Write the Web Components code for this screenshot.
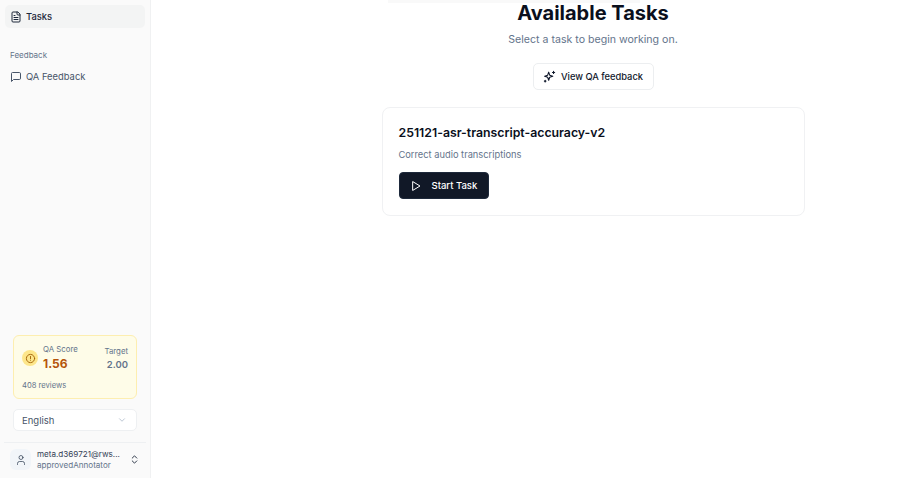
<!DOCTYPE html>
<html><head><meta charset="utf-8"><style>
html,body{margin:0;height:100%;background:#fff;overflow:hidden}
body{font-family:Inter,"Liberation Sans",sans-serif;color:#0f172a}
</style></head><body>
<app-shell>
<side-bar slot="side"></side-bar>
<task-page slot="main"></task-page>
</app-shell>
<script>
const def=(n,html)=>customElements.define(n,class extends HTMLElement{constructor(){super();this.attachShadow({mode:'open'}).innerHTML=html}});
def('app-shell',`<style>:host{display:flex;height:478px;width:919px;overflow:hidden}</style><slot name="side"></slot><slot name="main"></slot>`);
const ic=(s,p,w=1.5)=>`<svg width="${s}" height="${s}" viewBox="0 0 24 24" fill="none" stroke="currentColor" stroke-width="${w}" stroke-linecap="round" stroke-linejoin="round">${p}</svg>`;
def('nav-item',`<style>:host{display:flex;align-items:center;gap:4px;height:23px;padding:0 5px;margin:0;border-radius:5px;font-size:9.4px;color:#475569}
:host([active]){background:#f3f4f4;color:#1e293b;font-weight:500}
::slotted(svg){flex:none}</style><slot></slot>`);
def('score-card',`<style>:host{display:block;height:64px;box-sizing:border-box;margin:0 13px 0 13px;padding:8px 8px 0 8px;background:#fefce8;border:1px solid #fdeeb0;border-radius:6px}
.top{display:flex;align-items:center}
.badge{width:16px;height:16px;border-radius:50%;background:#fde68a;display:flex;align-items:center;justify-content:center;color:#a16207;margin-right:5px}
.lab{font-size:7.8px;color:#64748b;line-height:11px}
.val{font-size:12px;font-weight:700;color:#b45309;line-height:17px}
.r{margin-left:auto;text-align:right;padding-top:2px}
.t{font-size:7.8px;color:#64748b;line-height:11px}
.v{font-size:9.5px;font-weight:600;color:#64748b;line-height:15px}
.rev{font-size:7.6px;color:#64748b;margin-top:8px;line-height:11px}</style>
<div class="top"><div class="badge">${ic(11,'<circle cx="12" cy="12" r="9"/><path d="M12 7.5v5M12 16h.01"/>',2)}</div>
<div><div class="lab">QA Score</div><div class="val">1.56</div></div>
<div class="r"><div class="t">Target</div><div class="v">2.00</div></div></div>
<div class="rev">408 reviews</div>`);
def('lang-select',`<style>:host{display:flex;align-items:center;justify-content:space-between;height:22px;box-sizing:border-box;margin:10px 13px 0 13px;padding:0 9px 0 8px;background:#fff;border:1px solid #eef0f2;border-radius:5px;font-size:9.5px;color:#475569}
svg{color:#94a3b8}</style>English ${ic(10,'<path d="m6 9 6 6 6-6"/>')}`);
def('user-row',`<style>:host{display:flex;align-items:center;height:33px;margin:11px 4px 0;border-top:1px solid #eef0f2;padding:0 6px 2px}
.av{width:21px;height:21px;border-radius:6px;background:#f1f5f9;display:flex;align-items:center;justify-content:center;color:#334155;margin-right:6px;flex:none}
.txt{flex:1;min-width:0;font-size:8.1px;line-height:11px}
.n{color:#334155;white-space:nowrap}
.ro{color:#64748b}
.ch{color:#1e293b;display:flex}</style>
<div class="av">${ic(12,'<path d="M19 21v-2a4 4 0 0 0-4-4H9a4 4 0 0 0-4 4v2"/><circle cx="12" cy="7" r="4"/>')}</div>
<div class="txt"><div class="n">meta.d369721@rws...</div><div class="ro">approvedAnnotator</div></div>
<div class="ch">${ic(11,'<path d="m7 15 5 5 5-5M7 9l5-5 5 5"/>',2)}</div>`);
def('side-bar',`<style>:host{display:flex;flex-direction:column;flex:none;width:151px;height:478px;box-sizing:border-box;background:#fafafa;border-right:1px solid #f0f1f2}
.nav{padding:5px 5px 0 5px}
.grp{font-size:8px;color:#64748b;margin:22px 0 0 5px;line-height:11px;height:15px}
.sp{flex:1}</style>
<div class="nav"><nav-item active>${ic(12,'<path d="M15 2H6a2 2 0 0 0-2 2v16a2 2 0 0 0 2 2h12a2 2 0 0 0 2-2V7Z"/><path d="M14 2v4a2 2 0 0 0 2 2h4M10 9H8M16 13H8M16 17H8"/>',2)}Tasks</nav-item>
<div class="grp">Feedback</div>
<nav-item>${ic(12,'<path d="M21 15a2 2 0 0 1-2 2H7l-4 4V5a2 2 0 0 1 2-2h14a2 2 0 0 1 2 2z"/>',2)}QA Feedback</nav-item></div>
<div class="sp"></div><score-card></score-card><lang-select></lang-select><user-row></user-row>`);
def('task-card',`<style>:host{display:block;box-sizing:border-box;width:423px;height:109px;border:1px solid #f0f1f3;border-radius:8px;padding:16px 16px 0 16px;background:#fff}
h3{margin:0;font-size:12.3px;font-weight:600;line-height:17px;color:#0a0f1c}
p{margin:7px 0 0;font-size:9.3px;line-height:13px;color:#64748b}
button{margin-top:11px;display:flex;align-items:center;width:90px;height:27px;box-sizing:border-box;padding:0 0 0 10px;background:#111827;color:#fff;border:1px solid #1e293b;border-radius:4px;font:500 9.5px Inter,sans-serif}
svg{margin-right:10px}</style>
<h3>251121-asr-transcript-accuracy-v2</h3><p>Correct audio transcriptions</p>
<button>${ic(12,'<path d="M6 3.5 20 12 6 20.5z"/>',2)}Start Task</button>`);
def('task-page',`<style>:host{display:flex;flex-direction:column;align-items:center;flex:1;padding:0 0 0 116px;box-sizing:border-box;min-width:0;position:relative}
.line{position:absolute;top:0;left:237px;width:252px;height:3px;background:#f9f9f9}
h1{margin:0;font-size:20px;font-weight:700;line-height:26px;color:#0a0f1c}
p{margin:6px 0 0;font-size:10.6px;line-height:15px;color:#64748b}
.fb{margin-top:16px;display:flex;align-items:center;gap:5px;height:27px;width:121px;justify-content:center;padding:0;box-sizing:border-box;background:#fff;border:1px solid #eceef0;border-radius:5px;font:500 9.3px Inter,sans-serif;color:#0f172a}
task-card{margin-top:17px}</style>
<div class="line"></div><h1>Available Tasks</h1><p>Select a task to begin working on.</p>
<button class="fb">${ic(13,'<path d="M10.5 4l1.9 5.6L18 11.5l-5.6 1.9L10.5 19l-1.9-5.6L3 11.5l5.6-1.9z"/><path d="M19.5 2.5v4M17.5 4.5h4M4 19v3M2.5 20.5h3"/>',2)}View QA feedback</button>
<task-card></task-card>`);
</script></body></html>
